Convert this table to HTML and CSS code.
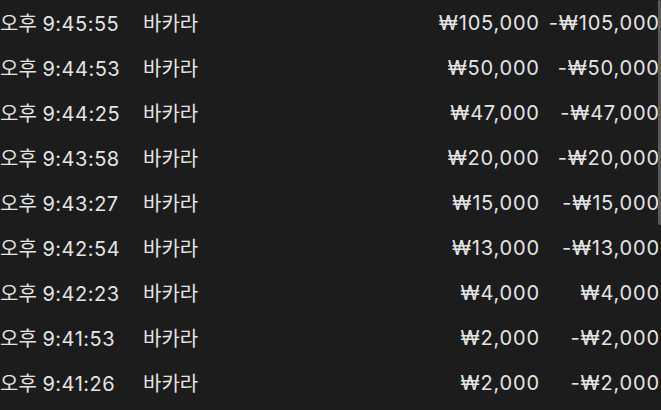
FILE: index.html
```html
<!DOCTYPE html>
<html lang="ko">
<head>
<meta charset="utf-8">
<link rel="stylesheet" href="styles.css">
</head>
<body>
<div class="list">
  <div class="row"><span class="time">오후 <span class="num">9:45:55</span></span><span class="game">바카라</span><span class="amt">₩105,000</span><span class="profit">-₩105,000</span></div>
  <div class="row"><span class="time">오후 <span class="num">9:44:53</span></span><span class="game">바카라</span><span class="amt">₩50,000</span><span class="profit">-₩50,000</span></div>
  <div class="row"><span class="time">오후 <span class="num">9:44:25</span></span><span class="game">바카라</span><span class="amt">₩47,000</span><span class="profit">-₩47,000</span></div>
  <div class="row"><span class="time">오후 <span class="num">9:43:58</span></span><span class="game">바카라</span><span class="amt">₩20,000</span><span class="profit">-₩20,000</span></div>
  <div class="row"><span class="time">오후 <span class="num">9:43:27</span></span><span class="game">바카라</span><span class="amt">₩15,000</span><span class="profit">-₩15,000</span></div>
  <div class="row"><span class="time">오후 <span class="num">9:42:54</span></span><span class="game">바카라</span><span class="amt">₩13,000</span><span class="profit">-₩13,000</span></div>
  <div class="row"><span class="time">오후 <span class="num">9:42:23</span></span><span class="game">바카라</span><span class="amt">₩4,000</span><span class="profit">₩4,000</span></div>
  <div class="row"><span class="time">오후 <span class="num">9:41:53</span></span><span class="game">바카라</span><span class="amt">₩2,000</span><span class="profit">-₩2,000</span></div>
  <div class="row"><span class="time">오후 <span class="num">9:41:26</span></span><span class="game">바카라</span><span class="amt">₩2,000</span><span class="profit">-₩2,000</span></div>
  <div class="scrollbar"></div>
</div>
</body>
</html>
```
FILE: styles.css
```css
html, body {
  margin: 0;
  padding: 0;
  background: #1c1c1c;
}
body {
  width: 661px;
  height: 410px;
  overflow: hidden;
  font-family: Inter, "Noto Sans CJK KR", sans-serif;
  font-size: 20px;
  color: #e4e4e4;
}
.list {
  position: relative;
  display: flex;
  flex-direction: column;
}
.row {
  display: grid;
  grid-template-columns: 143px 200px 196px 120px;
  height: 45px;
  align-items: center;
  white-space: nowrap;
}
.time, .game {
  text-align: left;
}
.num {
  letter-spacing: 0.5px;
}
.amt, .profit {
  text-align: right;
  letter-spacing: 0.8px;
}
.amt {
  margin-right: -0.8px;
}
.profit {
  margin-right: -0.8px;
}
.scrollbar {
  position: absolute;
  top: 0;
  right: 0;
  width: 3px;
  height: 225px;
  border-radius: 2px;
  background: #5a5a5a;
}
```
